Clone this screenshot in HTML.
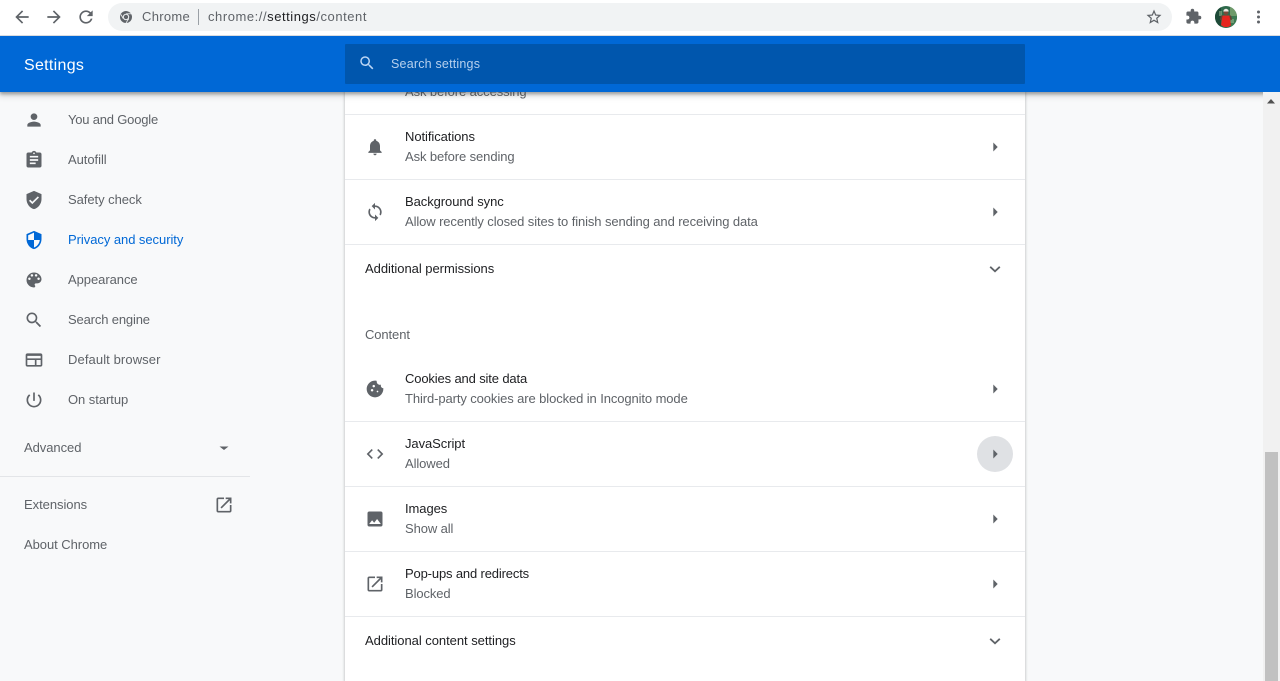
<!DOCTYPE html>
<html>
<head>
<meta charset="utf-8">
<style>
html,body{margin:0;padding:0;width:1280px;height:681px;overflow:hidden;background:#f8f9fa;font-family:"Liberation Sans",sans-serif;}
.a{position:absolute;white-space:nowrap;}
svg{position:absolute;display:block;}
.nav{font-size:13px;line-height:16px;color:#5f6368;left:68px;letter-spacing:-.05px;}
.t{font-size:13px;line-height:16px;color:#202124;left:405px;letter-spacing:-.07px;}
.s{font-size:13px;line-height:16px;color:#5f6368;left:405px;letter-spacing:-.1px;}
.m{font-size:13px;line-height:16px;color:#202124;left:365px;letter-spacing:-.04px;}
.hr{position:absolute;left:345px;width:680px;height:1px;background:#e8eaed;}
</style>
</head>
<body>
<!-- page content -->
<div class="a" style="left:345px;top:92px;width:680px;height:589px;background:#fff;box-shadow:0 0 2px 1px rgba(60,64,67,.22);"></div>

<div class="a s" style="top:84px;">Ask before accessing</div>
<div class="hr" style="top:114px"></div>
<div class="a t" style="top:129px;">Notifications</div>
<div class="a s" style="top:149px;">Ask before sending</div>
<div class="hr" style="top:179px"></div>
<div class="a t" style="top:194px;">Background sync</div>
<div class="a s" style="top:214px;">Allow recently closed sites to finish sending and receiving data</div>
<div class="hr" style="top:244px"></div>
<div class="a m" style="top:261px;">Additional permissions</div>
<div class="a" style="left:365px;top:327px;font-size:13px;line-height:16px;color:#5f6368;letter-spacing:-.1px;">Content</div>
<div class="a t" style="top:371px;letter-spacing:-.14px;">Cookies and site data</div>
<div class="a s" style="top:391px;">Third-party cookies are blocked in Incognito mode</div>
<div class="hr" style="top:421px"></div>
<div class="a t" style="top:436px;">JavaScript</div>
<div class="a s" style="top:456px;">Allowed</div>
<div class="hr" style="top:486px"></div>
<div class="a t" style="top:501px;">Images</div>
<div class="a s" style="top:521px;">Show all</div>
<div class="hr" style="top:551px"></div>
<div class="a t" style="top:566px;letter-spacing:-.15px;">Pop-ups and redirects</div>
<div class="a s" style="top:586px;">Blocked</div>
<div class="hr" style="top:616px"></div>
<div class="a m" style="top:633px;">Additional content settings</div>

<!-- row icons -->
<svg style="left:365px;top:137px" width="20" height="20" viewBox="0 0 24 24" fill="#5f6368"><path d="M12 22c1.100 0 2-.9 2-2h-4c0 1.100.9 2 2 2zm6-6v-5c0-3.070-1.630-5.640-4.500-6.320V4c0-.830-.670-1.500-1.500-1.500s-1.500.670-1.500 1.500v.680C7.640 5.360 6 7.920 6 11v5l-2 2v1h16v-1l-2-2z"/></svg>
<svg style="left:365px;top:202px" width="20" height="20" viewBox="0 0 24 24" fill="#5f6368"><path d="M12 4V1L8 5l4 4V6c3.310 0 6 2.690 6 6 0 1.010-.250 1.970-.7 2.800l1.460 1.460C19.540 15.030 20 13.570 20 12c0-4.420-3.580-8-8-8zm0 14c-3.310 0-6-2.690-6-6 0-1.010.250-1.970.7-2.800L5.240 7.740C4.460 8.970 4 10.430 4 12c0 4.420 3.580 8 8 8v3l4-4-4-4v3z"/></svg>
<svg style="left:365px;top:379px" width="20" height="20" viewBox="0 0 24 24" fill="#5f6368"><path d="M21.950 10.990c-1.790-.030-3.700-1.950-2.680-4.220-2.970 1-5.780-1.590-5.190-4.560C7.110.740 2 6.410 2 12c0 5.520 4.480 10 10 10 5.890 0 10.540-5.080 9.950-11.010zM8.500 15c-.830 0-1.500-.670-1.500-1.500S7.670 12 8.500 12s1.500.670 1.500 1.500S9.330 15 8.500 15zm2-5C9.670 10 9 9.330 9 8.500S9.670 7 10.500 7s1.500.670 1.500 1.500S11.330 10 10.500 10zm4.500 6c-.550 0-1-.450-1-1s.450-1 1-1 1 .450 1 1-.450 1-1 1z"/></svg>
<svg style="left:365px;top:444px" width="20" height="20" viewBox="0 0 24 24" fill="#5f6368"><path d="M9.400 16.600 4.800 12l4.600-4.600L8 6l-6 6 6 6 1.400-1.400zm5.200 0 4.600-4.600-4.600-4.600L16 6l6 6-6 6-1.400-1.400z"/></svg>
<svg style="left:365px;top:509px" width="20" height="20" viewBox="0 0 24 24" fill="#5f6368"><path d="M21 19V5c0-1.100-.9-2-2-2H5c-1.100 0-2 .9-2 2v14c0 1.100.9 2 2 2h14c1.100 0 2-.9 2-2zM8.500 13.500l2.500 3.010L14.500 12l4.500 6H5l3.500-4.500z"/></svg>
<svg style="left:365px;top:574px" width="20" height="20" viewBox="0 0 24 24" fill="#5f6368"><path d="M19 19H5V5h7V3H5c-1.110 0-2 .9-2 2v14c0 1.100.89 2 2 2h14c1.100 0 2-.9 2-2v-7h-2v7zM14 3v2h3.590l-9.830 9.830 1.410 1.410L19 6.410V10h2V3h-7z"/></svg>

<!-- arrows -->
<div class="a" style="left:977px;top:436px;width:36px;height:36px;border-radius:50%;background:#dfe1e4;"></div>
<svg style="left:985px;top:137px" width="20" height="20" viewBox="0 0 20 20" fill="#5f6368"><path d="M8.300 5.500 12.700 10l-4.400 4.500z"/></svg>
<svg style="left:985px;top:202px" width="20" height="20" viewBox="0 0 20 20" fill="#5f6368"><path d="M8.300 5.500 12.700 10l-4.400 4.500z"/></svg>
<svg style="left:985px;top:379px" width="20" height="20" viewBox="0 0 20 20" fill="#5f6368"><path d="M8.300 5.500 12.700 10l-4.400 4.500z"/></svg>
<svg style="left:985px;top:444px" width="20" height="20" viewBox="0 0 20 20" fill="#5f6368"><path d="M8.300 5.500 12.700 10l-4.400 4.500z"/></svg>
<svg style="left:985px;top:509px" width="20" height="20" viewBox="0 0 20 20" fill="#5f6368"><path d="M8.300 5.500 12.700 10l-4.400 4.500z"/></svg>
<svg style="left:985px;top:574px" width="20" height="20" viewBox="0 0 20 20" fill="#5f6368"><path d="M8.300 5.500 12.700 10l-4.400 4.500z"/></svg>
<svg style="left:985px;top:259px" width="20" height="20" viewBox="0 0 20 20" fill="none" stroke="#5f6368" stroke-width="1.800"><path d="M5.200 7.800 10 12.300l4.800-4.500"/></svg>
<svg style="left:985px;top:631px" width="20" height="20" viewBox="0 0 20 20" fill="none" stroke="#5f6368" stroke-width="1.800"><path d="M5.200 7.800 10 12.300l4.800-4.500"/></svg>

<!-- sidebar -->
<svg style="left:24px;top:110px" width="20" height="20" viewBox="0 0 24 24" fill="#5f6368"><path d="M12 12c2.210 0 4-1.790 4-4s-1.790-4-4-4-4 1.790-4 4 1.790 4 4 4zm0 2c-2.670 0-8 1.340-8 4v2h16v-2c0-2.660-5.330-4-8-4z"/></svg>
<div class="a nav" style="top:112px;letter-spacing:-.2px;">You and Google</div>
<svg style="left:24px;top:150px" width="20" height="20" viewBox="0 0 24 24" fill="#5f6368"><path d="M19 3h-4.180C14.400 1.840 13.300 1 12 1s-2.400.84-2.820 2H5c-1.100 0-2 .9-2 2v14c0 1.100.9 2 2 2h14c1.100 0 2-.9 2-2V5c0-1.100-.9-2-2-2zm-7 0c.55 0 1 .45 1 1s-.45 1-1 1-1-.45-1-1 .45-1 1-1zm2 14H7v-2h7v2zm3-4H7v-2h10v2zm0-4H7V7h10v2z"/></svg>
<div class="a nav" style="top:152px;">Autofill</div>
<svg style="left:24px;top:190px" width="20" height="20" viewBox="0 0 24 24" fill="#5f6368"><path d="M12 1 3 5v6c0 5.550 3.840 10.740 9 12 5.160-1.260 9-6.450 9-12V5l-9-4zm-2 16-4-4 1.410-1.410L10 14.170l6.590-6.590L18 9l-8 8z"/></svg>
<div class="a nav" style="top:192px;">Safety check</div>
<svg style="left:24px;top:230px" width="20" height="20" viewBox="0 0 24 24" fill="#0068d6"><path d="M12 1 3 5v6c0 5.550 3.840 10.740 9 12 5.160-1.260 9-6.450 9-12V5l-9-4zm0 10.990h7c-.530 4.120-3.280 7.790-7 8.940V12H5V6.300l7-3.110v8.800z"/></svg>
<div class="a nav" style="top:232px;color:#0068d6;">Privacy and security</div>
<svg style="left:24px;top:270px" width="20" height="20" viewBox="0 0 24 24" fill="#5f6368"><path d="M12 3a9 9 0 0 0 0 18c.830 0 1.500-.670 1.500-1.500 0-.390-.150-.740-.390-1.010-.230-.260-.380-.610-.380-.990 0-.830.670-1.500 1.500-1.500H16c2.760 0 5-2.240 5-5 0-4.420-4.030-8-9-8zm-5.500 9c-.830 0-1.500-.670-1.500-1.500S5.670 9 6.500 9 8 9.670 8 10.500 7.330 12 6.500 12zm3-4C8.670 8 8 7.330 8 6.500S8.670 5 9.500 5s1.500.670 1.500 1.500S10.330 8 9.500 8zm5 0c-.830 0-1.500-.670-1.500-1.500S13.670 5 14.500 5s1.500.670 1.500 1.500S15.330 8 14.500 8zm3 4c-.830 0-1.500-.670-1.500-1.500S16.670 9 17.500 9s1.500.670 1.500 1.500-.670 1.500-1.500 1.500z"/></svg>
<div class="a nav" style="top:272px;">Appearance</div>
<svg style="left:24px;top:310px" width="20" height="20" viewBox="0 0 24 24" fill="#5f6368"><path d="M15.500 14h-.790l-.280-.270A6.470 6.470 0 0 0 16 9.500 6.500 6.500 0 1 0 9.500 16c1.610 0 3.090-.590 4.230-1.570l.270.280v.790l5 4.990L20.490 19l-4.990-5zm-6 0C7.010 14 5 11.990 5 9.500S7.010 5 9.500 5 14 7.010 14 9.500 11.990 14 9.500 14z"/></svg>
<div class="a nav" style="top:312px;letter-spacing:-.15px;">Search engine</div>
<svg style="left:24px;top:350px" width="20" height="20" viewBox="0 0 24 24" fill="#5f6368"><path d="M20 4H4c-1.100 0-2 .9-2 2v12c0 1.100.9 2 2 2h16c1.100 0 2-.9 2-2V6c0-1.100-.9-2-2-2zM4 18v-6h9v6H4zm16 0h-5v-6h5v6zm0-8H4V7h16v3z" fill-rule="evenodd"/></svg>
<div class="a nav" style="top:352px;letter-spacing:.1px;">Default browser</div>
<svg style="left:24px;top:390px" width="20" height="20" viewBox="0 0 24 24" fill="#5f6368"><path d="M13 3h-2v10h2V3zm4.830 2.170-1.420 1.420A6.920 6.920 0 0 1 19 12c0 3.870-3.130 7-7 7s-7-3.130-7-7c0-2.190 1.010-4.150 2.580-5.420L6.170 5.170A8.932 8.932 0 0 0 3 12a9 9 0 0 0 18 0c0-2.740-1.230-5.190-3.170-6.830z"/></svg>
<div class="a nav" style="top:392px;">On startup</div>

<div class="a nav" style="left:24px;top:440px;">Advanced</div>
<svg style="left:214px;top:438px" width="20" height="20" viewBox="0 0 20 20" fill="#5f6368"><path d="M5.500 8.500h9L10 12z"/></svg>
<div class="a" style="left:0;top:476px;width:250px;height:1px;background:#e3e5e8;"></div>
<div class="a nav" style="left:24px;top:497px;">Extensions</div>
<svg style="left:214px;top:495px" width="20" height="20" viewBox="0 0 24 24" fill="#5f6368"><path d="M19 19H5V5h7V3H5c-1.110 0-2 .9-2 2v14c0 1.100.89 2 2 2h14c1.100 0 2-.9 2-2v-7h-2v7zM14 3v2h3.590l-9.830 9.830 1.410 1.410L19 6.410V10h2V3h-7z"/></svg>
<div class="a nav" style="left:24px;top:537px;">About Chrome</div>

<!-- blue header -->
<div class="a" style="left:0;top:36px;width:1280px;height:56px;background:#0068d6;box-shadow:0 2px 3px rgba(60,64,67,.4),0 3px 6px 1px rgba(60,64,67,.2);"></div>
<div class="a" style="left:24px;top:55px;font-size:16px;line-height:20px;color:#fff;letter-spacing:.3px;margin-top:1px;">Settings</div>
<div class="a" style="left:345px;top:44px;width:680px;height:40px;background:#0056ad;border-radius:1px;"></div>
<svg style="left:358px;top:54px" width="18" height="18" viewBox="0 0 24 24" fill="#bcd6f5"><path d="M15.500 14h-.790l-.280-.270A6.470 6.470 0 0 0 16 9.500 6.500 6.500 0 1 0 9.500 16c1.610 0 3.090-.590 4.230-1.570l.270.280v.790l5 4.990L20.490 19l-4.990-5zm-6 0C7.010 14 5 11.990 5 9.500S7.010 5 9.500 5 14 7.010 14 9.500 11.990 14 9.500 14z"/></svg>
<div class="a" style="left:391px;top:56px;font-size:12.500px;line-height:16px;color:#b6d0ee;letter-spacing:.2px;">Search settings</div>

<!-- scrollbar -->
<div class="a" style="left:1263px;top:92px;width:17px;height:589px;background:#f1f1f1;"></div>
<div class="a" style="left:1265px;top:452px;width:13px;height:229px;background:#c1c1c1;"></div>
<svg style="left:1263px;top:92px" width="17" height="17" viewBox="0 0 17 17" fill="#505050"><path d="M4 11.500h8L8 7z"/></svg>

<!-- browser toolbar -->
<div class="a" style="left:0;top:0;width:1280px;height:35px;background:#fff;border-bottom:1px solid #dadce0;"></div>
<svg style="left:12px;top:7px" width="20" height="20" viewBox="0 0 24 24" fill="#5f6368"><path d="M20 11H7.830l5.590-5.590L12 4l-8 8 8 8 1.410-1.410L7.830 13H20v-2z"/></svg>
<svg style="left:44px;top:7px" width="20" height="20" viewBox="0 0 24 24" fill="#5f6368"><path d="M12 4l-1.410 1.410L16.170 11H4v2h12.170l-5.580 5.590L12 20l8-8z"/></svg>
<svg style="left:76px;top:7px" width="20" height="20" viewBox="0 0 24 24" fill="#5f6368"><path d="M17.650 6.350A7.958 7.958 0 0 0 12 4c-4.420 0-7.990 3.580-7.990 8s3.570 8 7.990 8c3.730 0 6.840-2.550 7.730-6h-2.080A5.990 5.990 0 0 1 12 18c-3.310 0-6-2.690-6-6s2.690-6 6-6c1.660 0 3.140.690 4.220 1.780L13 11h7V4l-2.350 2.350z"/></svg>

<div class="a" style="left:108px;top:3px;width:1064px;height:28px;border-radius:14px;background:#f1f3f4;"></div>
<svg style="left:119px;top:10px" width="14" height="14" viewBox="0 0 14 14"><circle cx="7" cy="7" r="6" fill="#5f6368"/><circle cx="7" cy="7" r="3.200" fill="#f1f3f4"/><circle cx="7" cy="7" r="2.200" fill="#5f6368"/><path d="M7 3.800h5.500" stroke="#f1f3f4" stroke-width=".8"/><path d="M4.200 8.600 1.900 4.500M9.800 8.600 7 13" stroke="#f1f3f4" stroke-width=".8"/></svg>
<div class="a" style="left:142px;top:9px;font-size:13px;line-height:16px;color:#5f6368;letter-spacing:.3px;">Chrome</div>
<div class="a" style="left:198px;top:9px;width:1px;height:16px;background:#9aa0a6;"></div>
<div class="a" style="left:208px;top:9px;font-size:13px;line-height:16px;color:#5f6368;letter-spacing:.55px;">chrome://<span style="color:#202124">settings</span>/content</div>
<svg style="left:1145px;top:8px" width="18" height="18" viewBox="0 0 24 24" fill="#5f6368"><path d="M22 9.240l-7.190-.620L12 2 9.190 8.630 2 9.240l5.460 4.730L5.820 21 12 17.270 18.180 21l-1.630-7.030L22 9.240zM12 15.400l-3.760 2.270 1-4.280-3.320-2.880 4.380-.380L12 6.100l1.710 4.040 4.380.380-3.320 2.880 1 4.280L12 15.400z"/></svg>
<svg style="left:1185px;top:8px" width="17" height="17" viewBox="0 0 24 24" fill="#5f6368"><path d="M20.500 11H19V7c0-1.100-.9-2-2-2h-4V3.500a2.500 2.500 0 0 0-5 0V5H4c-1.100 0-1.990.9-1.990 2v3.800H3.500c1.490 0 2.700 1.210 2.700 2.700s-1.210 2.700-2.700 2.700H2V20c0 1.100.9 2 2 2h3.800v-1.500c0-1.490 1.210-2.700 2.700-2.700s2.700 1.210 2.700 2.700V22H17c1.100 0 2-.9 2-2v-4h1.500a2.500 2.500 0 0 0 0-5z"/></svg>
<svg style="left:1215px;top:6px" width="22" height="22" viewBox="0 0 22 22"><defs><clipPath id="c"><circle cx="11" cy="11" r="11"/></clipPath></defs><g clip-path="url(#c)"><rect width="22" height="22" fill="#2f6a4c"/><rect x="0" y="0" width="6" height="22" fill="#1d4a38"/><rect x="15" y="1" width="7" height="9" fill="#6f9a6a"/><rect x="16" y="10" width="6" height="12" fill="#3c7a52"/><path d="M4 5h3v5H4zM15 13h4v4h-4z" fill="#8fb08a" opacity=".6"/><path d="M7.500 9.500h7l1.500 10-3 1.500h-4l-3-2z" fill="#e5261f"/><path d="M6 9.500l1.500 0-1 5-1.500-1zM16 9.500h-1.500l1 5 1.500-1z" fill="#6b3f30"/><circle cx="11" cy="6.500" r="2.400" fill="#7a4a38"/><path d="M8.300 5.500a2.700 2.700 0 0 1 5.400 0z" fill="#ece8e2"/></g></svg>
<svg style="left:1250px;top:8px" width="18" height="18" viewBox="0 0 18 18" fill="#5f6368"><circle cx="8.500" cy="4" r="1.500"/><circle cx="8.500" cy="9" r="1.500"/><circle cx="8.500" cy="14" r="1.500"/></svg>
</body>
</html>
